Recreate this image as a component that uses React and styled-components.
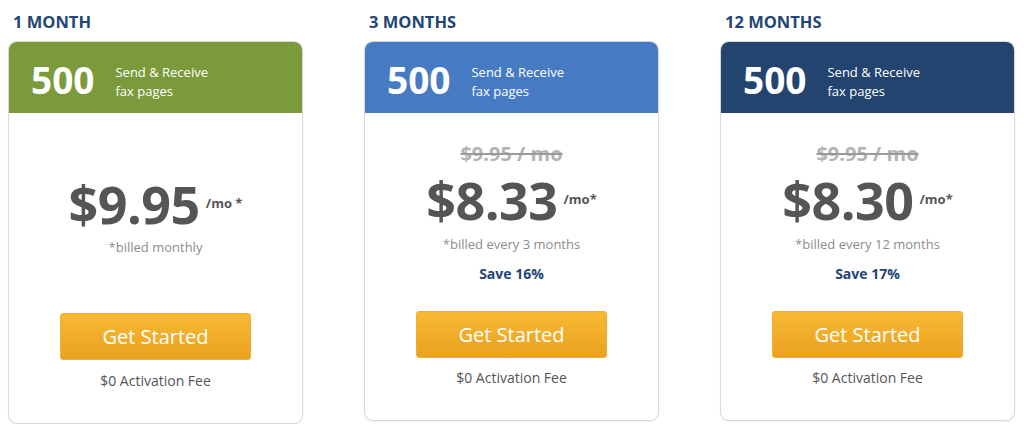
import React from 'react';
import styled, { createGlobalStyle } from 'styled-components';

const GlobalStyle = createGlobalStyle`
    html, body {
        margin: 0;
        padding: 0;
        background: #ffffff;
        font-family: 'Open Sans', 'Liberation Sans', sans-serif;
    }
`;

const plans = [
    {
        title: '1 MONTH',
        color: '#7b9a3b',
        price: '$9.95',
        unit: '/mo *',
        billed: '*billed monthly',
        first: true,
    },
    {
        title: '3 MONTHS',
        color: '#467bc4',
        old: '$9.95 / mo',
        price: '$8.33',
        unit: '/mo*',
        billed: '*billed every 3 months',
        save: 'Save 16%',
    },
    {
        title: '12 MONTHS',
        color: '#22446f',
        old: '$9.95 / mo',
        price: '$8.30',
        unit: '/mo*',
        billed: '*billed every 12 months',
        save: 'Save 17%',
    },
];

function App() {
    return (
        <>
            <GlobalStyle />
            <Plans>
                {plans.map((plan) => (
                    <Column key={plan.title}>
                        <PlanTitle>{plan.title}</PlanTitle>
                        <Card>
                            <Band $color={plan.color}>
                                <Pages>500</Pages>
                                <PagesText>
                                    Send &amp; Receive
                                    <br />
                                    fax pages
                                </PagesText>
                            </Band>
                            <Body $first={plan.first}>
                                {plan.old && <OldPrice>{plan.old}</OldPrice>}
                                <PriceRow $first={plan.first}>
                                    <Amount>{plan.price}</Amount>
                                    <Unit>{plan.unit}</Unit>
                                </PriceRow>
                                <Billed $first={plan.first}>{plan.billed}</Billed>
                                {plan.save && <Save>{plan.save}</Save>}
                                <StartButton $first={plan.first}>Get Started</StartButton>
                                <Fee $first={plan.first}>$0 Activation Fee</Fee>
                            </Body>
                        </Card>
                    </Column>
                ))}
            </Plans>
        </>
    );
}

const Plans = styled.div`
    display: grid;
    grid-template-columns: repeat(3, 295px);
    column-gap: 61px;
    align-items: start;
    padding: 10px 0 0 8px;
`;

const Column = styled.div`
    display: flex;
    flex-direction: column;
`;

const PlanTitle = styled.h2`
    margin: 0 0 7px 5px;
    font-size: 16.5px;
    line-height: 24px;
    font-weight: 700;
    color: #1f4675;
`;

const Card = styled.div`
    border: 1px solid #d8d8d8;
    border-radius: 9px;
    overflow: hidden;
    background: #fff;
    box-shadow: 0 1px 2px rgba(0, 0, 0, 0.06);
`;

const Band = styled.div`
    display: flex;
    align-items: flex-start;
    gap: 21px;
    height: 72px;
    padding: 0 0 0 23px;
    margin: -1px -1px 0 -1px;
    background: ${(p) => p.$color};
    color: #fff;
`;

const Pages = styled.div`
    margin-top: 19px;
    font-size: 37px;
    font-weight: 700;
    line-height: 40px;
`;

const PagesText = styled.div`
    margin-top: 22px;
    font-size: 13px;
    line-height: 19px;
`;

const Body = styled.div`
    display: flex;
    flex-direction: column;
    align-items: center;
    padding: ${(p) => (p.$first ? '63px 0 32px' : '31px 0 32px')};
`;

const OldPrice = styled.div`
    font-size: 20px;
    line-height: 20px;
    font-weight: 700;
    color: #b3b3b3;
    text-decoration: line-through;
    text-decoration-color: #9a9a9a;
    text-decoration-thickness: 2px;
`;

const PriceRow = styled.div`
    display: flex;
    align-items: flex-start;
    gap: 6px;
    margin-top: ${(p) => (p.$first ? '0' : '8px')};
    color: #555555;
    font-weight: 700;
`;

const Amount = styled.span`
    font-size: 52px;
    line-height: 56px;
    letter-spacing: -0.5px;
`;

const Unit = styled.span`
    margin-top: 19px;
    font-size: 13px;
    line-height: 16px;
    white-space: nowrap;
`;

const Billed = styled.div`
    margin-top: ${(p) => (p.$first ? '6px' : '7px')};
    font-size: 13px;
    line-height: 18px;
    color: #8d8d8d;
`;

const Save = styled.div`
    margin-top: 11px;
    font-size: 14px;
    line-height: 20px;
    font-weight: 700;
    color: #1f4675;
`;

const StartButton = styled.button`
    margin-top: ${(p) => (p.$first ? '57px' : '27px')};
    width: 191px;
    height: 47px;
    border: 1px solid #efb02b;
    border-radius: 3px;
    background: linear-gradient(to bottom, #f6b932, #eba121);
    color: #ffffff;
    font-family: inherit;
    font-size: 20px;
    cursor: pointer;
`;

const Fee = styled.div`
    margin-top: ${(p) => (p.$first ? '11px' : '10px')};
    font-size: 14px;
    line-height: 20px;
    color: #555555;
`;

export default App;
